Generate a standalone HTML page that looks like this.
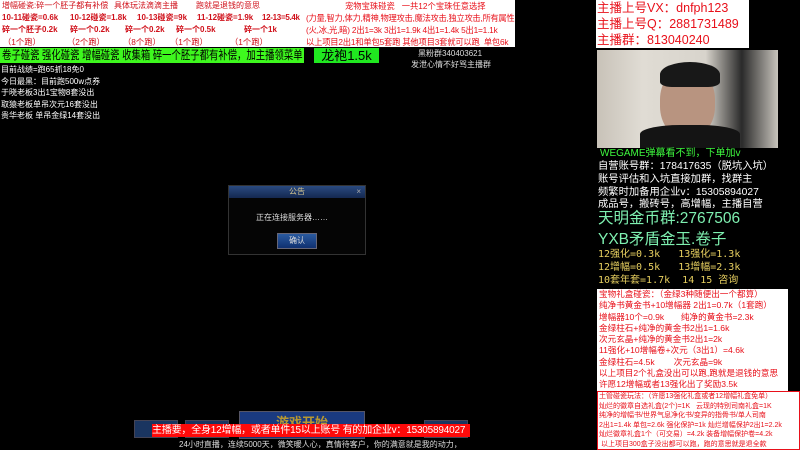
<!DOCTYPE html>
<html><head><meta charset="utf-8"><style>
*{margin:0;padding:0;box-sizing:border-box}
body{width:800px;height:450px;background:#000;position:relative;overflow:hidden;font-family:"Liberation Sans","Noto Sans CJK SC",sans-serif}
.a{position:absolute;white-space:nowrap}
.r{color:#d0101a;font-weight:bold;font-size:8px;line-height:12px}
.n{color:#e8101a;font-size:8.3px;line-height:12px}
.w{color:#fff;font-size:8px;line-height:11px}
.y{color:#e8d060}
.rb{color:#e8101a;font-size:8.6px;line-height:11.3px}
</style></head><body>
<div class="a" style="left:0;top:0;width:304px;height:47px;background:#fff"></div>
<div class="a" style="left:304px;top:0;width:211px;height:47px;background:#fff"></div>
<div class="a n" style="left:2px;top:0;color:#d0101a;font-size:8px">增幅碰瓷:碎一个胚子都有补偿</div>
<div class="a n" style="left:114px;top:0;color:#d0101a;font-size:8px">具体玩法滴滴主播</div>
<div class="a n" style="left:196px;top:0;color:#d0101a;font-size:8px">跑就是退钱的意思</div>
<div class="a r" style="left:2px;top:12px">10-11碰瓷=0.6k</div>
<div class="a r" style="left:70px;top:12px">10-12碰瓷=1.8k</div>
<div class="a r" style="left:137px;top:12px">10-13碰瓷=9k</div>
<div class="a r" style="left:197px;top:12px">11-12碰瓷=1.9k</div>
<div class="a r" style="left:262px;top:12px;letter-spacing:-0.3px">12-13=5.4k</div>
<div class="a r" style="left:2px;top:24px">碎一个胚子0.2k</div>
<div class="a r" style="left:70px;top:24px">碎一个0.2k</div>
<div class="a r" style="left:125px;top:24px">碎一个0.2k</div>
<div class="a r" style="left:176px;top:24px">碎一个0.5k</div>
<div class="a r" style="left:244px;top:24px">碎一个1k</div>
<div class="a n" style="left:3px;top:36px;color:#d0101a">（1个跑）</div>
<div class="a n" style="left:67px;top:36px;color:#d0101a">（2个跑）</div>
<div class="a n" style="left:123px;top:36px;color:#d0101a">（8个跑）</div>
<div class="a n" style="left:170px;top:36px;color:#d0101a">（1个跑）</div>
<div class="a n" style="left:230px;top:36px;color:#d0101a">（1个跑）</div>
<div class="a n" style="left:345px;top:0">宠物宝珠碰瓷&nbsp;&nbsp;&nbsp;一共12个宝珠任意选择</div>
<div class="a n" style="left:306px;top:12px;letter-spacing:-0.3px">(力量,智力,体力,精神,物理攻击,魔法攻击,独立攻击,所有属性</div>
<div class="a n" style="left:306px;top:24px;letter-spacing:-0.2px">(火,冰,光,暗) 2出1=3k 3出1=1.9k 4出1=1.4k 5出1=1.1k</div>
<div class="a n" style="left:306px;top:36px;letter-spacing:-0.2px">以上项目2出1和单包5套跑&nbsp;其他项目3套就可以跑&nbsp;&nbsp;单包6k</div>
<div class="a" style="left:0;top:48px;width:304px;height:15px;background:#3ef81e;overflow:hidden"><div style="position:absolute;left:2px;top:0;color:#000;font-size:12px;line-height:15px;white-space:nowrap;transform:scaleX(0.78);transform-origin:0 0">卷子碰瓷 强化碰瓷 增幅碰瓷 收集箱 碎一个胚子都有补偿，加主播领菜单</div></div>
<div class="a" style="left:314px;top:48px;width:65px;height:15px;background:#20e820;color:#000;font-size:13px;line-height:15px;text-align:center">龙袍1.5k</div>
<div class="a w" style="left:418px;top:48px;color:#ddd">黑粉群340403621</div>
<div class="a w" style="left:411px;top:59px;color:#ddd">发泄心情不好骂主播群</div>
<div class="a w" style="left:1px;top:64px;line-height:11.5px">目前战绩=跑65抓18免0<br>今日最黑：目前跑500w点券<br>于晓老板3出1宝物8套没出<br>取猿老板单吊次元16套没出<br>贵华老板 单吊金绿14套没出</div>
<div class="a" style="left:228px;top:185px;width:138px;height:70px;background:#050505;border:1px solid #333"></div>
<div class="a" style="left:229px;top:186px;width:136px;height:12px;background:linear-gradient(#2a4a80,#142850);color:#d8c890;font-size:8px;line-height:12px;text-align:center">公告<span style="position:absolute;right:4px;color:#aaa">×</span></div>
<div class="a" style="left:256px;top:212px;color:#ddd;font-size:8px">正在连接服务器……</div>
<div class="a" style="left:277px;top:233px;width:40px;height:16px;background:linear-gradient(#2a5aa0,#103070);border:1px solid #667;color:#ddd;font-size:8px;line-height:14px;text-align:center">确认</div>
<div class="a" style="left:134px;top:420px;width:44px;height:18px;background:#1a3560;border:1px solid #445"></div>
<div class="a" style="left:185px;top:420px;width:44px;height:18px;background:#1a3560;border:1px solid #445"></div>
<div class="a" style="left:239px;top:411px;width:126px;height:28px;background:#1a3a80;border:1px solid #556;color:#b89830;font-size:13px;text-align:center;line-height:22px;font-weight:bold">游戏开始</div>
<div class="a" style="left:424px;top:420px;width:44px;height:18px;background:#1a3560;border:1px solid #445"></div>
<div class="a" style="left:152px;top:424px;width:318px;height:13px;background:#ff0a0a;color:#fff;font-size:10px;line-height:13px;letter-spacing:-0.2px">主播要，全身12增幅，或者单件15以上账号 有的加企业v：15305894027</div>
<div class="a w" style="left:179px;top:439px;color:#ddd">24小时直播，连续5000天，微笑暖人心，真情待客户，你的满意就是我的动力，</div>
<div class="a" style="left:596px;top:0;width:153px;height:48px;background:#fff;color:#e8101a;font-size:12.5px;line-height:16px;padding-left:1px">主播上号VX：dnfph123<br>主播上号Q：2881731489<br>主播群：813040240</div>
<div class="a" style="left:597px;top:50px;width:181px;height:98px;background:linear-gradient(90deg,#c8c2b8 0,#e0dcd4 25%,#d8d4cc 60%,#2a2a2a 80%,#c8c4bc 100%)"></div>
<div class="a" style="left:660px;top:68px;width:55px;height:70px;background:#b89480;border-radius:45%"></div>
<div class="a" style="left:660px;top:62px;width:60px;height:25px;background:#181818;border-radius:50% 50% 20% 20%"></div>
<div class="a" style="left:640px;top:125px;width:100px;height:23px;background:#141414;border-radius:40% 40% 0 0"></div>
<div class="a" style="left:600px;top:148px;color:#3ef83e;font-size:10px;line-height:12px">WEGAME弹幕看不到，下单加v</div>
<div class="a" style="left:598px;top:161px;color:#fff;font-size:10.3px;line-height:12.8px">自营账号群：178417635（脱坑入坑）<br>账号评估和入坑直接加群，找群主<br>频繁时加备用企业v：15305894027<br>成品号，搬砖号，高增幅，主播自营</div>
<div class="a" style="left:598px;top:209px;color:#7ef0b0;font-size:15.5px;line-height:20px">天明金币群:2767506</div>
<div class="a" style="left:598px;top:230px;color:#7ef0b0;font-size:15.5px;line-height:20px">YXB矛盾金玉.卷子</div>
<div class="a y" style="left:598px;top:248px;font-family:'DejaVu Sans Mono','Noto Sans CJK SC',monospace;font-size:10px;line-height:13px">12强化=0.3k&nbsp;&nbsp;&nbsp;13强化=1.3k<br>12增幅=0.5k&nbsp;&nbsp;&nbsp;13增幅=2.3k<br>10套年套=1.7k&nbsp;&nbsp;14 15 咨询</div>
<div class="a rb" style="left:597px;top:289px;width:191px;height:102px;background:#fff;padding-left:2px">宝物礼盒碰瓷：（金绿3种随便出一个都算）<br>纯净书黄金书+10增幅器 2出1=0.7k（1套跑）<br>增幅器10个=0.9k&nbsp;&nbsp;&nbsp;&nbsp;&nbsp;&nbsp;&nbsp;纯净的黄金书=2.3k<br>金绿柱石+纯净的黄金书2出1=1.6k<br>次元玄晶+纯净的黄金书2出1=2k<br>11强化+10增幅卷+次元（3出1）=4.6k<br>金绿柱石=4.5k&nbsp;&nbsp;&nbsp;&nbsp;&nbsp;&nbsp;&nbsp;&nbsp;次元玄晶=9k<br>以上项目2个礼盒没出可以跑,跑就是退钱的意思<br>许愿12增幅或者13强化出了奖励3.5k</div>
<div class="a" style="left:597px;top:391px;width:203px;height:59px;background:#fff;border:1px solid #e8101a;color:#e8101a;font-size:7px;line-height:9.6px;padding-left:1px">土管碰瓷玩法：（许愿13强化礼盒或者12增幅礼盒免单）<br>灿烂的徽章自选礼盒(2个)=1K&nbsp;&nbsp;&nbsp;云现的特别司南礼盒=1K<br>纯净的增幅书/世界气息净化书/变异的指骨书/单人司南<br>2出1=1.4k&nbsp;单包=2.6k&nbsp;强化保护=1k 灿烂增幅保护2出1=2.2k<br>灿烂徽章礼盒1个（可交易）=4.2k&nbsp;装备增幅保护卷=4.2k<br>&nbsp;以上项目300盒子没出都可以跑，跑的意思就是退全款</div>
</body></html>
